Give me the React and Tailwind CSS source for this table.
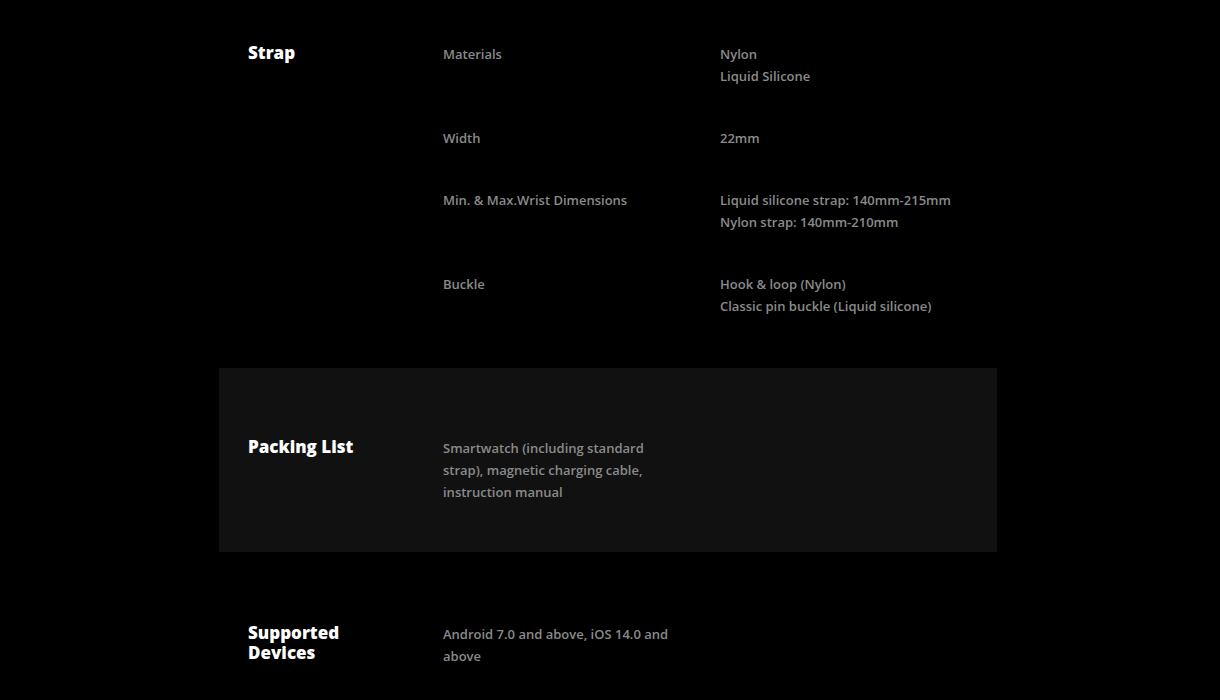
import React from "react";

const strapRows = [
	{ label: "Materials", values: ["Nylon", "Liquid Silicone"] },
	{ label: "Width", values: ["22mm"] },
	{
		label: "Min. & Max.Wrist Dimensions",
		values: ["Liquid silicone strap: 140mm-215mm", "Nylon strap: 140mm-210mm"],
	},
	{
		label: "Buckle",
		values: ["Hook & loop (Nylon)", "Classic pin buckle (Liquid silicone)"],
	},
];

const Heading = ({ children }) => (
	<h3 className="w-[195px] shrink-0 text-[17px] leading-[20px] font-extrabold text-white">
		{children}
	</h3>
);

const App = () => {
	return (
		<main className="bg-black min-h-[700px] w-full font-['Open_Sans',sans-serif]">
			<div className="w-[778px] ml-[219px]">

				{/* STRAP */}
				<section className="flex px-[29px] pt-[43px] pb-[51px]">
					<Heading>Strap</Heading>
					<div className="flex flex-col gap-[40px]">
						{strapRows.map((row) => (
							<div key={row.label} className="flex">
								<div className="w-[277px] text-[13px] leading-[22px] font-semibold text-[#8a8a8a]">
									{row.label}
								</div>
								<div className="text-[13px] leading-[22px] font-semibold text-[#8a8a8a]">
									{row.values.map((v) => (
										<div key={v}>{v}</div>
									))}
								</div>
							</div>
						))}
					</div>
				</section>

				{/* PACKING LIST */}
				<section className="flex bg-[#111111] px-[29px] pt-[69px] pb-[49px]">
					<Heading>Packing List</Heading>
					<p className="w-[230px] text-[13px] leading-[22px] font-semibold text-[#8a8a8a]">
						Smartwatch (including standard strap), magnetic charging cable, instruction manual
					</p>
				</section>

				{/* SUPPORTED DEVICES */}
				<section className="flex px-[29px] pt-[71px] pb-[40px]">
					<Heading>
						Supported
						<br />
						Devices
					</Heading>
					<p className="w-[240px] text-[13px] leading-[22px] font-semibold text-[#8a8a8a]">
						Android 7.0 and above, iOS 14.0 and above
					</p>
				</section>

			</div>
		</main>
	);
};

export default App;
